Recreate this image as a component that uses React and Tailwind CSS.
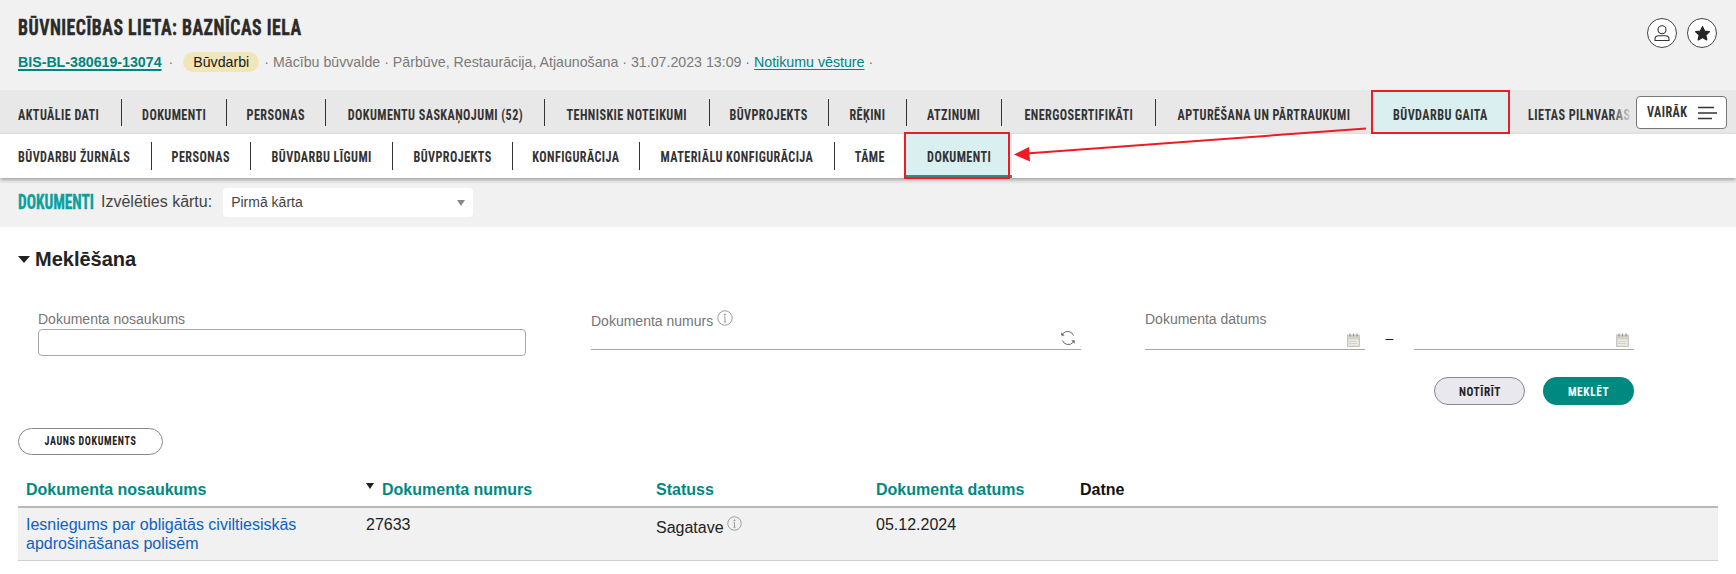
import React from "react";

const display = "font-['Liberation_Sans_Narrow','Roboto_Condensed','Liberation_Sans',sans-serif] font-bold uppercase";
const squeeze = "inline-block whitespace-nowrap scale-x-[.84]";
const squeezeLeft = "inline-block whitespace-nowrap origin-left scale-x-[.84]";

const mainTabs = [
  ["Aktuālie dati", "w-[122px] pl-[18px] justify-start", squeezeLeft],
  ["Dokumenti", "w-[105px] justify-center", squeeze],
  ["Personas", "w-[99px] justify-center", squeeze],
  ["Dokumentu saskaņojumi (52)", "w-[219px] justify-center", squeeze],
  ["Tehniskie noteikumi", "w-[165px] justify-center", squeeze],
  ["Būvprojekts", "w-[119px] justify-center", squeeze],
  ["Rēķini", "w-[78px] justify-center", squeeze],
  ["Atzinumi", "w-[95px] justify-center", squeeze],
  ["Energosertifikāti", "w-[154px] justify-center", squeeze],
];

const subTabs = [
  ["Būvdarbu žurnāls", "w-[152px] pl-[18px] justify-start", squeezeLeft],
  ["Personas", "w-[99px] justify-center", squeeze],
  ["Būvdarbu līgumi", "w-[142px] justify-center", squeeze],
  ["Būvprojekts", "w-[120px] justify-center", squeeze],
  ["Konfigurācija", "w-[127px] justify-center", squeeze],
  ["Materiālu konfigurācija", "w-[195px] justify-center", squeeze],
  ["Tāme", "w-[71px] justify-center", squeeze],
];

function Info({ className }) {
  return (
    <svg viewBox="0 0 16 16" className={className} fill="none" stroke="#8f8f8f" strokeWidth="0.9">
      <circle cx="8" cy="8" r="7.2" />
      <path d="M8 7v5M6.8 12h2.4M6.9 7H8" />
      <circle cx="8" cy="4.6" r="0.6" fill="#8f8f8f" />
    </svg>
  );
}

function Calendar() {
  return (
    <svg viewBox="0 0 13 14" className="w-[13px] h-[14px]">
      <rect x="0.5" y="2" width="12" height="11.5" fill="#d6d2c8" stroke="#b5b1a8" strokeWidth="0.6" />
      <rect x="1.5" y="6.5" width="10" height="6" fill="#efece6" />
      <path d="M3 0.5v3M6.5 0.5v3M10 0.5v3" stroke="#8c8c8c" strokeWidth="1" />
      <path d="M2.5 8.5h8M2.5 10.5h8" stroke="#a8a8a8" strokeWidth="0.8" strokeDasharray="1 1" />
    </svg>
  );
}

function Refresh() {
  return (
    <svg viewBox="0 0 16 16" className="w-4 h-4" fill="none" stroke="#5f5f5f" strokeWidth="0.9">
      <path d="M13.6 5.6A6.2 6.2 0 0 0 3 3.6L1.8 5" />
      <path d="M2.4 10.4a6.2 6.2 0 0 0 10.6 2l1.2-1.4" />
      <path d="M1.6 2.4V5.4H4.4M14.4 13.6v-3h-2.8" fill="#5f5f5f" strokeWidth="0.4" />
    </svg>
  );
}

export default function App() {
  return (
    <div className="relative w-[1736px] h-[574px] overflow-hidden bg-white font-['Liberation_Sans',Arial,sans-serif] text-[#222]">
      {/* header */}
      <header className="h-[90px] bg-[#f1f1f1] pl-[18px] pr-[18px] flex justify-between">
        <div>
          <h1 className={`${display} text-[22px] leading-[24px] mt-[16px] text-[#2a2a2a] tracking-[0.6px] origin-left scale-x-[.81] whitespace-nowrap [-webkit-text-stroke:0.4px_#2a2a2a]`}>
            Būvniecības lieta: Baznīcas iela
          </h1>
          <div className="mt-[12px] flex items-center text-[14.2px] leading-5 text-[#7a7a7a] h-5">
            <a className="font-bold text-[#00857f] underline underline-offset-2 decoration-2">BIS-BL-380619-13074</a>
            <span className="ml-[7px]">·</span>
            <span className="ml-[10px] h-5 w-[76px] flex items-center justify-center rounded-full bg-[#f0e6b8] text-[#1a1a1a]">Būvdarbi</span>
            <span className="ml-[5px]">· Mācību būvvalde · Pārbūve, Restaurācija, Atjaunošana · 31.07.2023 13:09 ·&nbsp;</span>
            <a className="text-[#00857f] underline underline-offset-2">Notikumu vēsture</a>
            <span>&nbsp;·</span>
          </div>
        </div>
        <div className="flex gap-[10px] mt-[18px] mr-px">
          <div className="w-[30px] h-[30px] rounded-full bg-white border border-[#444] flex items-center justify-center">
            <svg viewBox="0 0 18 18" className="w-[18px] h-[18px]" fill="none" stroke="#333" strokeWidth="1.1">
              <circle cx="9" cy="5.8" r="4" />
              <path d="M2 16.5v-1.6c0-2 1.6-3.2 3.6-3.2h6.8c2 0 3.6 1.2 3.6 3.2v1.6z" />
            </svg>
          </div>
          <div className="w-[30px] h-[30px] rounded-full bg-white border border-[#444] flex items-center justify-center">
            <svg viewBox="0 0 18 18" className="w-[17px] h-[17px]" fill="#262626" stroke="#262626" strokeWidth="1.4" strokeLinejoin="round">
              <path d="M9 1.8l2.2 4.7 5 .6-3.7 3.5 1 5.1L9 13.2l-4.5 2.5 1-5.1L1.8 7.1l5-.6z" />
            </svg>
          </div>
        </div>
      </header>

      {/* main tabs */}
      <nav className={`${display} h-[44px] bg-[#e8e8e8] flex text-[14.5px] tracking-[0.5px] text-[#333]`}>
        {mainTabs.map(([t, c, s]) => (
          <div key={t} className="h-full flex items-center">
            <span className={`${c} h-[27px] pt-[7px] flex items-center border-r border-[#333] whitespace-nowrap`}><span className={s}>{t}</span></span>
          </div>
        ))}
        <div className="w-[216px] h-full pt-[7px] flex items-center justify-center"><span className={squeeze}>Apturēšana un pārtraukumi</span></div>
        <div className="w-[137px] h-full pt-[9px] flex items-center justify-center bg-[#d9eff0] border-b-2 border-[#3f8583]"><span className={squeeze}>Būvdarbu gaita</span></div>
        <div className="relative w-[124px] h-full pt-[7px] flex items-center pl-[19px] overflow-hidden">
          <span className={squeezeLeft}>Lietas pilnvaras</span>
          <span className="absolute right-0 top-0 h-full w-[22px] bg-gradient-to-r from-transparent to-[#e8e8e8]" />
        </div>
        <div className="w-[3px]" />
        <div className="mt-[6px] w-[91px] h-[33px] bg-white border border-[#777] rounded-[4px] flex items-center justify-between pl-[10px] pr-[9px]">
          <span className={squeezeLeft}>Vairāk</span>
          <svg viewBox="0 0 20 14" className="w-[20px] h-[14px]" stroke="#333" strokeWidth="1.3">
            <path d="M1 1.5h16M1 7h19M1 12.5h14" />
          </svg>
        </div>
      </nav>

      {/* sub tabs */}
      <nav className={`${display} relative h-[44px] bg-white flex text-[14.5px] tracking-[0.5px] text-[#333] shadow-[0_2px_4px_rgba(0,0,0,0.35)]`}>
        {subTabs.map(([t, c, s]) => (
          <div key={t} className="h-full flex items-center">
            <span className={`${c} h-[28px] pt-[4px] flex items-center border-r border-[#333] whitespace-nowrap`}><span className={s}>{t}</span></span>
          </div>
        ))}
        <div className="w-[106px] h-full pt-[7px] flex items-center justify-center bg-[#d9eff0] border-b-[3px] border-[#3f8583]"><span className={squeeze}>Dokumenti</span></div>
      </nav>

      {/* selector */}
      <div className="h-[49px] bg-[#f1f1f1] pl-[18px] pt-[10px] flex items-start">
        <span className={`${display} w-[75px] text-[21px] leading-[28px] text-[#0aa0a0] origin-left scale-x-[.73] whitespace-nowrap [-webkit-text-stroke:0.4px_#0aa0a0]`}>Dokumenti</span>
        <span className="ml-[8px] text-[16px] leading-[28px] text-[#444]">Izvēlēties kārtu:</span>
        <div className="ml-[11px] w-[250px] h-[29px] bg-white rounded-[4px] flex items-center justify-between pl-[8px] pr-[4px] text-[14px] text-[#444]">
          <span>Pirmā kārta</span>
          <span className="w-0 h-0 mr-[4px] border-l-[4px] border-r-[4px] border-t-[6px] border-l-transparent border-r-transparent border-t-[#888]" />
        </div>
      </div>

      {/* search */}
      <section className="px-[18px]">
        <div className="mt-[20px] flex items-center h-[24px]">
          <span className="w-0 h-0 border-l-[6px] border-r-[6px] border-t-[7px] border-l-transparent border-r-transparent border-t-[#222]" />
          <h2 className="ml-[5px] text-[20px] font-bold text-[#222]">Meklēšana</h2>
        </div>

        <div className="mt-[39px] pl-[20px] flex h-[54px] text-[14px] text-[#757575]">
          <div className="w-[488px]">
            <div className="leading-[16px] mt-[1px]">Dokumenta nosaukums</div>
            <div className="mt-[2px] h-[27px] bg-white border border-[#a8a8a8] rounded-[4px]" />
          </div>
          <div className="ml-[65px] w-[490px]">
            <div className="flex items-start h-[20px]">
              <span className="mt-[3px] leading-[16px]">Dokumenta numurs</span>
              <Info className="ml-[4px] w-[16px] h-[16px]" />
            </div>
            <div className="h-[19px] pr-[5px] flex justify-end box-content border-b border-[#a8a8a8]"><Refresh /></div>
          </div>
          <div className="ml-[64px] w-[220px]">
            <div className="leading-[16px] mt-[1px]">Dokumenta datums</div>
            <div className="mt-[3px] h-[19px] pr-[5px] flex justify-end items-center box-content border-b border-[#a8a8a8]"><Calendar /></div>
          </div>
          <div className="w-[49px] flex justify-center pt-[20px] text-[#222] leading-[16px]">–</div>
          <div className="w-[220px]">
            <div className="mt-[20px] h-[19px] pr-[5px] flex justify-end items-center box-content border-b border-[#a8a8a8]"><Calendar /></div>
          </div>
        </div>

        <div className={`${display} mt-[13px] flex justify-end gap-[18px] pr-[84px] text-[13.5px] tracking-[0.7px]`}>
          <button className="w-[91px] h-[28px] rounded-full bg-[#e8e8ee] border border-[#888] text-[#222] uppercase"><span className={squeeze}>Notīrīt</span></button>
          <button className="w-[91px] h-[28px] rounded-full bg-[#008981] text-white uppercase"><span className={squeeze}>Meklēt</span></button>
        </div>

        <button className={`${display} mt-[23px] block w-[145px] h-[27px] rounded-full bg-white border border-[#888] text-[#222] text-[12.5px] tracking-[0.8px] uppercase`}><span className="inline-block whitespace-nowrap scale-x-[.8]">Jauns dokuments</span></button>

        {/* table */}
        <div className="mt-[23px] grid grid-cols-[340px_290px_220px_204px_1fr] h-[30px] text-[16px] font-bold text-[#008981] border-b-2 border-[#b9b9b9]">
          <div className="pl-[8px]">Dokumenta nosaukums</div>
          <div className="pl-[8px] flex items-start">
            <span className="mt-[5px] w-0 h-0 border-l-[4px] border-r-[4px] border-t-[6px] border-l-transparent border-r-transparent border-t-[#222]" />
            <span className="ml-[8px]">Dokumenta numurs</span>
          </div>
          <div className="pl-[8px]">Statuss</div>
          <div className="pl-[8px]">Dokumenta datums</div>
          <div className="pl-[8px] text-[#111]">Datne</div>
        </div>
        <div className="grid grid-cols-[340px_290px_220px_204px_1fr] h-[53px] bg-[#f1f1f1] border-b border-[#cfcfcf] text-[16px] leading-[19px] pt-[7px] text-[#222]">
          <a className="pl-[8px] text-[#0b62c4] w-[300px]">Iesniegums par obligātās civiltiesiskās apdrošināšanas polisēm</a>
          <div className="pl-[8px]">27633</div>
          <div className="pl-[8px] flex items-start"><span className="mt-[3px]">Sagatave</span><Info className="ml-[3px] w-[15px] h-[15px] mt-[1px]" /></div>
          <div className="pl-[8px]">05.12.2024</div>
          <div />
        </div>
      </section>

      {/* annotations */}
      <div className="absolute left-[1371px] top-[90px] w-[139px] h-[44px] border-2 border-[#ed1c24] pointer-events-none" />
      <div className="absolute left-[904px] top-[132px] w-[106px] h-[47px] border-2 border-[#ed1c24] pointer-events-none" />
      <svg className="absolute left-0 top-0 pointer-events-none" width="1736" height="574">
        <path d="M1366 128.5L1026 153.5" stroke="#ed1c24" strokeWidth="2" />
        <path d="M1014 154.5L1029 147L1030 161.5z" fill="#ed1c24" />
      </svg>
    </div>
  );
}
